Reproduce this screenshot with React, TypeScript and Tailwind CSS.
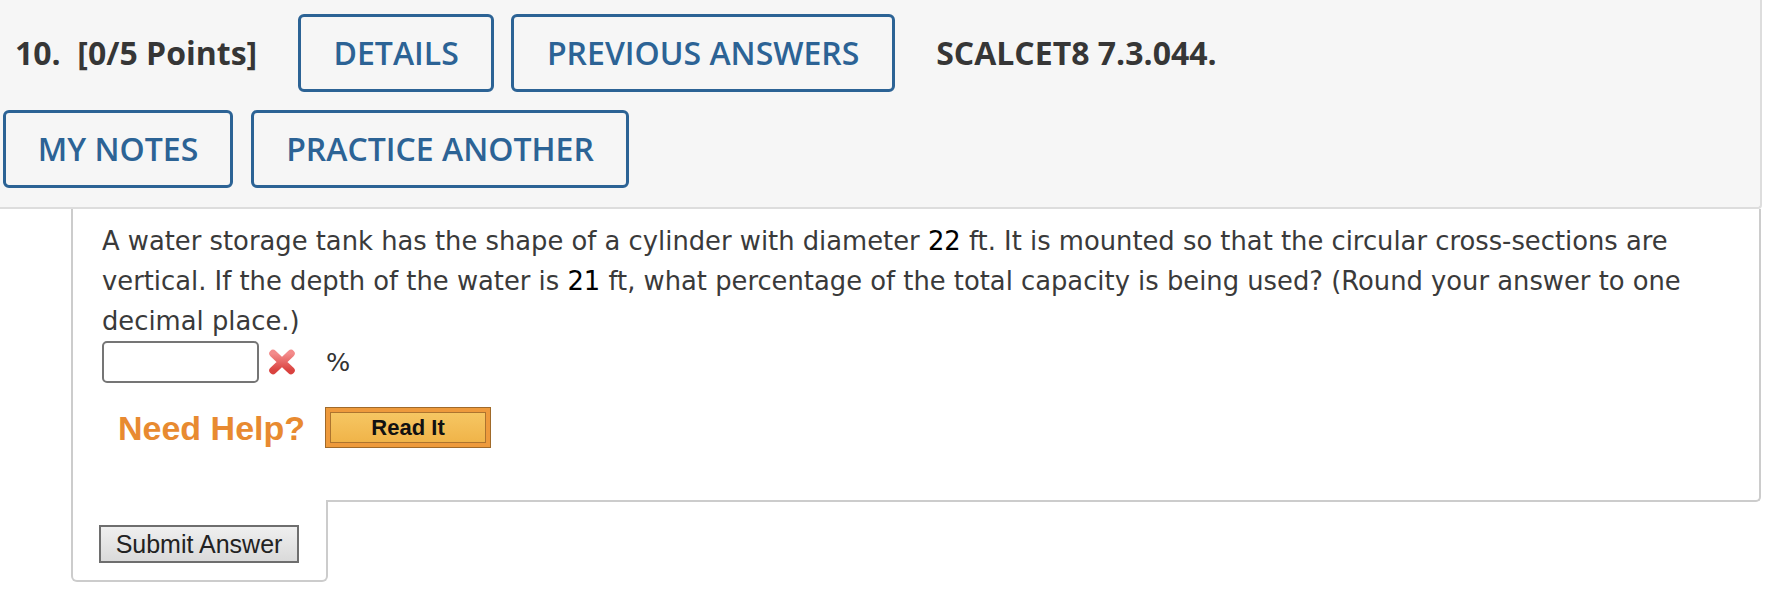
const HeaderButton = ({ label, width }: { label: string; width: string }) => (
  <button
    type="button"
    className={`${width} h-[78px] border-[3px] border-[#2c6395] rounded-[6px] bg-[#f6f6f6] text-[#2c6395] font-['Open_Sans',sans-serif] font-semibold text-[32px] leading-none flex items-center justify-center`}
  >
    {label}
  </button>
)

const RedCross = () => (
  <svg width="28" height="26" viewBox="0 0 28 26" className="ml-[9px]">
    <defs>
      <linearGradient id="xg" x1="0" y1="0" x2="0" y2="1">
        <stop offset="0" stopColor="#f38b8b" />
        <stop offset="1" stopColor="#d9423f" />
      </linearGradient>
    </defs>
    <path d="M5 4.5 L23 21.5 M23 4.5 L5 21.5" stroke="url(#xg)" strokeWidth="7.5" strokeLinecap="round" fill="none" />
  </svg>
)

export default function App() {
  return (
    <div className="w-[1774px] h-[608px] bg-white overflow-hidden">
      {/* question header */}
      <div className="w-[1762px] bg-[#f6f6f6] border-r-2 border-b-2 border-[#dddddd] rounded-br-[4px] pt-[14px] pb-[19px] pl-[3px] flex flex-col gap-[18px]">
        <div className="flex items-center">
          <h2 className="ml-[12px] mr-[41px] font-['Open_Sans',sans-serif] font-bold text-[32px] text-[#363636] whitespace-pre">
            10.  [0/5 Points]
          </h2>
          <HeaderButton label="DETAILS" width="w-[196px]" />
          <div className="w-[17px]" />
          <HeaderButton label="PREVIOUS ANSWERS" width="w-[384px]" />
          <h3 className="ml-[41px] font-['Open_Sans',sans-serif] font-bold text-[32px] text-[#363636]">
            SCALCET8 7.3.044.
          </h3>
        </div>
        <div className="flex items-center gap-[18px]">
          <HeaderButton label="MY NOTES" width="w-[230px]" />
          <HeaderButton label="PRACTICE ANOTHER" width="w-[378px]" />
        </div>
      </div>

      {/* question body */}
      <div className="ml-[71px] w-[1690px]">
        <div className="border-x-2 border-b-2 border-[#cccccc] rounded-br-[5px] pl-[29px] pr-[24px] pt-[12px] pb-[52px]">
          <p className="font-['DejaVu_Sans',sans-serif] text-[25.8px] leading-[40px] text-[#3a3a3a]">
            A water storage tank has the shape of a cylinder with diameter <span className="text-black">22</span> ft. It is
            mounted so that the circular cross-sections are vertical. If the depth of the water is{" "}
            <span className="text-black">21</span> ft, what percentage of the total capacity is being used? (Round your
            answer to one decimal place.)
          </p>
          <div className="flex items-center h-[42px]">
            <input
              type="text"
              className="w-[157px] h-[42px] border-2 border-[#757575] rounded-[5px] bg-white"
            />
            <RedCross />
            <span className="ml-[30px] font-['DejaVu_Sans',sans-serif] text-[25.5px] text-[#333]">%</span>
          </div>
          <div className="flex items-center mt-[24px]">
            <span className="ml-[16px] font-['Liberation_Sans',sans-serif] font-bold text-[34px] text-[#e88a30] leading-none">
              Need Help?
            </span>
            <button
              type="button"
              className="ml-[20px] w-[166px] h-[41px] border border-[#a06a2a] bg-[#ee9a3c] p-[4px]"
            >
              <div className="h-full border border-[#ad742f] bg-gradient-to-b from-[#f6c662] to-[#f0b449] flex items-center justify-center font-['Liberation_Sans',sans-serif] font-bold text-[22px] text-[#111]">
                Read It
              </div>
            </button>
          </div>
        </div>
        <div className="-mt-[2px] w-[257px] bg-white border-x-2 border-b-2 border-[#cccccc] rounded-b-[6px] pt-[25px] pb-[17px] pl-[26px]">
          <button
            type="button"
            className="w-[200px] h-[38px] border-2 border-[#6e6e6e] bg-gradient-to-b from-[#efefef] to-[#dadada] font-['Liberation_Sans',sans-serif] text-[25px] text-[#222] leading-none"
          >
            Submit Answer
          </button>
        </div>
      </div>
    </div>
  )
}
